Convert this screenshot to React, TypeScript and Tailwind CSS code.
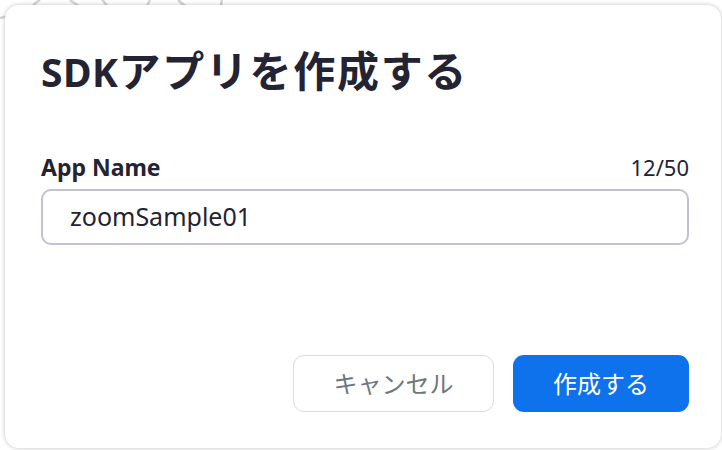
import React from "react";

const font = { fontFamily: '"Noto Sans", "Noto Sans CJK JP", sans-serif' };

const Sketch = () => (
  <svg
    className="absolute left-0 top-0"
    width="722"
    height="40"
    viewBox="0 0 722 40"
    fill="none"
    stroke="#d4d4d8"
    strokeWidth="2.5"
  >
    <path d="M40 0 C 30 6, 30 10, 38 14" />
    <path d="M70 0 C 78 6, 84 10, 92 12" />
    <path d="M150 0 C 146 6, 146 10, 150 14" />
    <path d="M178 0 C 186 8, 196 12, 204 8" />
    <path d="M222 0 C 220 6, 222 10, 228 12" />
    <path d="M100 -4 Q 108 10 120 14" />
    <path d="M0 18 L 8 16" />
  </svg>
);

export default function App() {
  return (
    <div className="relative h-[450px] w-[722px] overflow-hidden bg-white" style={font}>
      <Sketch />
      <div className="relative ml-[5px] mt-[5px] flex h-[443px] w-[716px] flex-col rounded-[14px] bg-white pl-9 pr-8 pt-[42px] shadow-[0_0_4px_rgba(0,0,0,0.25)]">
        <h1 className="text-[39px] font-bold leading-[48px] text-[#232333]">
          <span className="tracking-[0.5px]">SDK</span>
          <span className="text-[42px] leading-[48px] tracking-[1.7px]">アプリを作成する</span>
        </h1>
        <div className="mt-[56px] flex items-center justify-between text-[#232333]">
          <span className="text-[23px] font-bold leading-[30px]">App Name</span>
          <span className="text-[22px] leading-[30px]">12/50</span>
        </div>
        <div className="mt-[7px] flex h-[56px] items-center rounded-[10px] border-2 border-[#c1c1d4] px-[27px] text-[25px] text-[#232333]">
          zoomSample01
        </div>
        <div className="mt-[110px] flex justify-end gap-[19px]">
          <button className="h-[57px] w-[201px] rounded-[11px] border-[1.5px] border-[#dcdce0] bg-white text-[24px] text-[#6e7680]">
            キャンセル
          </button>
          <button className="h-[57px] w-[176px] rounded-[11px] bg-[#0e72ed] text-[24px] text-white">
            作成する
          </button>
        </div>
      </div>
    </div>
  );
}
